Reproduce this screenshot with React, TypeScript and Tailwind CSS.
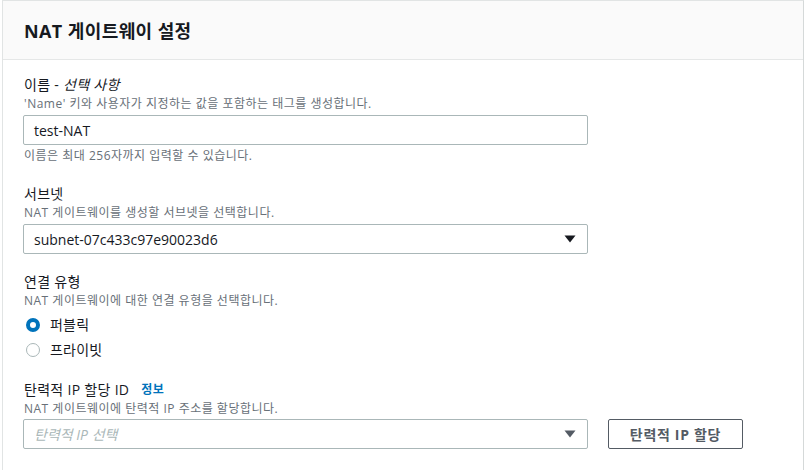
import React from "react";

const font = { fontFamily: '"Open Sans", "Noto Sans CJK KR", sans-serif' };

function Caret({ color }: { color: string }) {
  return (
    <svg width="12" height="8" viewBox="0 0 12 8" className="shrink-0">
      <path d="M0.5 0.5 L11.5 0.5 L6 7.5 Z" fill={color} />
    </svg>
  );
}

function Radio({ checked, label }: { checked: boolean; label: string }) {
  return (
    <div className="flex h-[25px] items-center">
      <div className="flex w-[24px] shrink-0">
        {checked ? (
          <span className="block h-[14px] w-[14px] rounded-full border-[4px] border-[#0073bb] bg-white" />
        ) : (
          <span className="block h-[14px] w-[14px] rounded-full border-[1.5px] border-[#aab7b8] bg-white" />
        )}
      </div>
      <span className="text-[14px] leading-[20px] tracking-[0.2px] text-[#16191f]">{label}</span>
    </div>
  );
}

export default function App() {
  return (
    <div className="h-[470px] w-[804px] bg-white pl-[2px]" style={font}>
      <div className="h-full border-l border-r border-t border-[#e1e4e4] border-r-[#d5d9d9]">
        <div className="flex h-[59px] items-center border-b border-[#e5e7e7] bg-[#fafafa] px-[21px] pt-[1px]">
          <h2 className="text-[18px] font-bold leading-[24px] tracking-[0.4px] text-[#16191f]">NAT 게이트웨이 설정</h2>
        </div>
        <div className="px-[20px] pt-[15px]">
          {/* Name */}
          <div>
            <div className="h-[20px] pl-[1px] text-[14px] leading-[20px] tracking-[0.3px] text-[#16191f]">
              이름 - <i>선택 사항</i>
            </div>
            <div className="mt-[1px] pl-[1px] text-[12px] leading-[16px] tracking-[0.5px] text-[#687078]">
              'Name' 키와 사용자가 지정하는 값을 포함하는 태그를 생성합니다.
            </div>
            <div className="mt-[3px] flex h-[30px] w-[565px] items-center rounded-[2px] border border-[#aab7b8] px-[10px] text-[14px] text-[#16191f]">
              test-NAT
            </div>
            <div className="mt-[3px] pl-[1px] text-[12px] leading-[16px] tracking-[0.5px] text-[#687078]">
              이름은 최대 256자까지 입력할 수 있습니다.
            </div>
          </div>

          {/* Subnet */}
          <div className="mt-[20px]">
            <div className="h-[20px] pl-[1px] text-[14px] leading-[20px] tracking-[0.3px] text-[#16191f]">서브넷</div>
            <div className="mt-[1px] pl-[1px] text-[12px] leading-[16px] tracking-[0.5px] text-[#687078]">
              NAT 게이트웨이를 생성할 서브넷을 선택합니다.
            </div>
            <div className="mt-[3px] flex h-[30px] w-[565px] items-center justify-between rounded-[2px] border border-[#aab7b8] pl-[10px] pr-[11px] text-[14px] text-[#16191f]">
              <span>subnet-07c433c97e90023d6</span>
              <Caret color="#16191f" />
            </div>
          </div>

          {/* Connection type */}
          <div className="mt-[18px]">
            <div className="h-[20px] pl-[1px] text-[14px] leading-[20px] tracking-[0.3px] text-[#16191f]">연결 유형</div>
            <div className="mt-[1px] pl-[1px] text-[12px] leading-[16px] tracking-[0.5px] text-[#687078]">
              NAT 게이트웨이에 대한 연결 유형을 선택합니다.
            </div>
            <div className="mt-[3px] pl-[3px]">
              <Radio checked label="퍼블릭" />
              <Radio checked={false} label="프라이빗" />
            </div>
          </div>

          {/* EIP */}
          <div className="mt-[18px]">
            <div className="flex h-[20px] items-center gap-[12px] pl-[1px] text-[14px] leading-[20px] tracking-[0.3px] text-[#16191f]">
              <span>탄력적 IP 할당 ID</span>
              <span className="text-[12px] font-bold tracking-[0.5px] text-[#0073bb]">정보</span>
            </div>
            <div className="mt-[1px] pl-[1px] text-[12px] leading-[16px] tracking-[0.5px] text-[#687078]">
              NAT 게이트웨이에 탄력적 IP 주소를 할당합니다.
            </div>
            <div className="mt-[2px] flex items-center gap-[20px]">
              <div className="flex h-[30px] w-[565px] items-center justify-between rounded-[2px] border border-[#aab7b8] pl-[10px] pr-[11px] text-[14px]">
                <span className="italic text-[#aab7b8]">탄력적 IP 선택</span>
                <Caret color="#545b64" />
              </div>
              <button className="flex h-[30px] w-[135px] items-center justify-center rounded-[2px] border border-[#545b64] bg-white text-[14px] font-bold tracking-[0.7px] text-[#545b64]">
                탄력적 IP 할당
              </button>
            </div>
          </div>
        </div>
      </div>
    </div>
  );
}
